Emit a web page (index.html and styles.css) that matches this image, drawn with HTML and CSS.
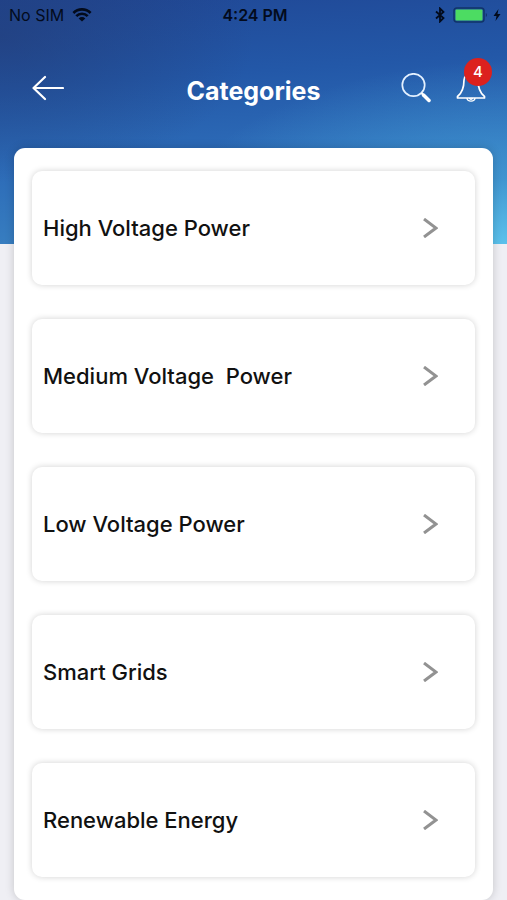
FILE: index.html
```html
<!DOCTYPE html>
<html lang="en">
<head>
<meta charset="utf-8">
<meta name="viewport" content="width=device-width, initial-scale=1">
<title>Categories</title>
<link rel="stylesheet" href="styles.css">
</head>
<body>
<header class="hero">
  <div class="status">
    <div class="status-left">
      <span>No SIM</span>
      <svg width="20" height="14" viewBox="0 0 20 14" aria-hidden="true">
        <path d="M1.4 5a12 12 0 0 1 17.2 0M4.3 8.2a7.8 7.8 0 0 1 11.4 0" fill="none" stroke="currentColor" stroke-width="2.6"/>
        <path d="M10 13.6 6.7 10.4a4.7 4.7 0 0 1 6.6 0z" fill="currentColor"/>
      </svg>
    </div>
    <time class="clock">4:24 PM</time>
    <div class="status-right">
      <svg width="10" height="16" viewBox="0 0 10 16" aria-hidden="true">
        <path d="M1 4.5 8.5 11 5 14.5v-13L8.5 5 1 11.5" fill="none" stroke="currentColor" stroke-width="1.8"/>
      </svg>
      <svg width="36" height="16" viewBox="0 0 36 16" aria-hidden="true">
        <rect x="1" y="1" width="30" height="14" rx="3" fill="none" stroke="#103468" stroke-width="1.5"/>
        <rect x="2.5" y="2.5" width="27" height="11" rx="1" fill="#4cdc62"/>
        <path d="M32.8 6v4c1.6-.6 1.6-3.4 0-4z" fill="#103468"/>
      </svg>
      <svg width="8" height="12" viewBox="0 0 8 12" aria-hidden="true">
        <path d="M5.5 0 .5 7h3L2.500 12l5-7h-3z" fill="currentColor"/>
      </svg>
    </div>
  </div>
  <nav class="bar">
    <div class="bar-start">
      <button class="icon-button" type="button" aria-label="Back">
        <svg width="32" height="26" viewBox="0 0 32 26" aria-hidden="true">
          <path d="M13 2 1.5 13 13 24M1.5 13H31" fill="none" stroke="currentColor" stroke-width="2.2" stroke-linecap="round" stroke-linejoin="round"/>
        </svg>
      </button>
    </div>
    <h1 class="title">Categories</h1>
    <div class="bar-end">
      <button class="icon-button" type="button" aria-label="Search">
        <svg width="30" height="30" viewBox="0 0 30 30" aria-hidden="true">
          <circle cx="12.5" cy="12" r="11.2" fill="none" stroke="#e4f1ff" stroke-width="1.7"/>
          <path d="m20.5 20 2 2" stroke="currentColor" stroke-width="2"/>
          <path d="m22.5 22 5.5 5.5" stroke="currentColor" stroke-width="3.5" stroke-linecap="round"/>
        </svg>
      </button>
      <button class="icon-button" type="button" aria-label="Notifications">
        <svg width="30" height="30" viewBox="0 0 30 30" aria-hidden="true">
          <path d="M15 1c-4.5 0-7 3-7 6 0 8-2 13-6.500 16.500V25h27v-1.500C24 20 22 15 22 7c0-3-2.500-6-7-6z" fill="none" stroke="currentColor" stroke-width="1.7" stroke-linejoin="round"/>
          <path d="M11 25c.4 4.2 7.6 4.2 8 0M13.5 25c.4 1.6 2.6 1.6 3 0" fill="none" stroke="currentColor" stroke-width="1.4"/>
        </svg>
        <span class="badge">4</span>
      </button>
    </div>
  </nav>
</header>
<main class="panel">
  <a class="card" href="#high">High Voltage Power
    <svg class="chevron" width="16" height="20" viewBox="0 0 16 20" aria-hidden="true"><path d="m2 1 12 9-12 9"/></svg></a>
  <a class="card" href="#medium">Medium Voltage&nbsp; Power
    <svg class="chevron" width="16" height="20" viewBox="0 0 16 20" aria-hidden="true"><path d="m2 1 12 9-12 9"/></svg></a>
  <a class="card" href="#low">Low Voltage Power
    <svg class="chevron" width="16" height="20" viewBox="0 0 16 20" aria-hidden="true"><path d="m2 1 12 9-12 9"/></svg></a>
  <a class="card" href="#smart">Smart Grids
    <svg class="chevron" width="16" height="20" viewBox="0 0 16 20" aria-hidden="true"><path d="m2 1 12 9-12 9"/></svg></a>
  <a class="card" href="#renewable">Renewable Energy
    <svg class="chevron" width="16" height="20" viewBox="0 0 16 20" aria-hidden="true"><path d="m2 1 12 9-12 9"/></svg></a>
</main>
</body>
</html>
```
FILE: styles.css
```css
* {
  box-sizing: border-box;
}

body {
  margin: 0;
  background: #efeff4;
  color: #111;
  font-family: Inter, "Liberation Sans", sans-serif;
}

.hero {
  padding-bottom: 136px;
  background:
    radial-gradient(ellipse 70% 80% at 100% 105%, #5fc8f0 0%, rgba(72, 168, 220, 0.6) 40%, rgba(60, 140, 205, 0) 100%),
    radial-gradient(ellipse 50% 60% at 0% 15%, rgba(35, 57, 112, 0.55), rgba(35, 57, 112, 0) 100%),
    linear-gradient(176deg, #204896 0%, #2358a8 32%, #2d6cb8 62%, #3c86c4 100%);
  background-color: #2d6cb8;
}

.status,
.bar {
  display: grid;
  grid-template-columns: 1fr auto 1fr;
  align-items: center;
}

.status {
  padding: 5px 6px 5px 9px;
  color: #030b1c;
  font-size: 16px;
  line-height: 20px;
}

.status-left,
.status-right,
.bar-end {
  display: flex;
  align-items: center;
}

.status-left {
  gap: 8px;
}

.status-right {
  justify-content: flex-end;
  gap: 8px;
}

.status-right svg:last-child {
  margin-left: -4px;
}

.clock {
  font-weight: 600;
}

.bar {
  padding: 38px 21px 0;
}

.bar-start {
  padding-left: 11px;
}

.title {
  margin: 0;
  padding-top: 6px;
  color: #fff;
  font-size: 25px;
  font-weight: 700;
  line-height: 34px;
}

.bar-end {
  justify-content: flex-end;
  gap: 25px;
}

.icon-button {
  display: block;
  position: relative;
  padding: 0;
  border: 0;
  background: none;
  color: #fff;
  cursor: pointer;
}

.icon-button svg {
  display: block;
}

.badge {
  position: absolute;
  top: -15px;
  right: -6px;
  width: 28px;
  height: 28px;
  border-radius: 50%;
  background: #dc211e;
  font: 500 15px/28px Inter, "Liberation Sans", sans-serif;
  text-align: center;
}

.panel {
  position: relative;
  display: flex;
  flex-direction: column;
  gap: 34px;
  margin: -96px 14px 0;
  padding: 23px 18px;
  border-radius: 11px;
  background: #fff;
  box-shadow: 0 0 10px rgba(0, 0, 0, 0.18);
}

.card {
  display: flex;
  align-items: center;
  justify-content: space-between;
  min-height: 114px;
  padding: 0 37px 0 11px;
  border-radius: 10px;
  background: #fff;
  box-shadow: 0 0 6px rgba(0, 0, 0, 0.18);
  color: #111;
  font-size: 22px;
  font-weight: 500;
  line-height: 28px;
  text-decoration: none;
}

.chevron {
  fill: none;
  stroke: #929292;
  stroke-width: 3px;
}
```
